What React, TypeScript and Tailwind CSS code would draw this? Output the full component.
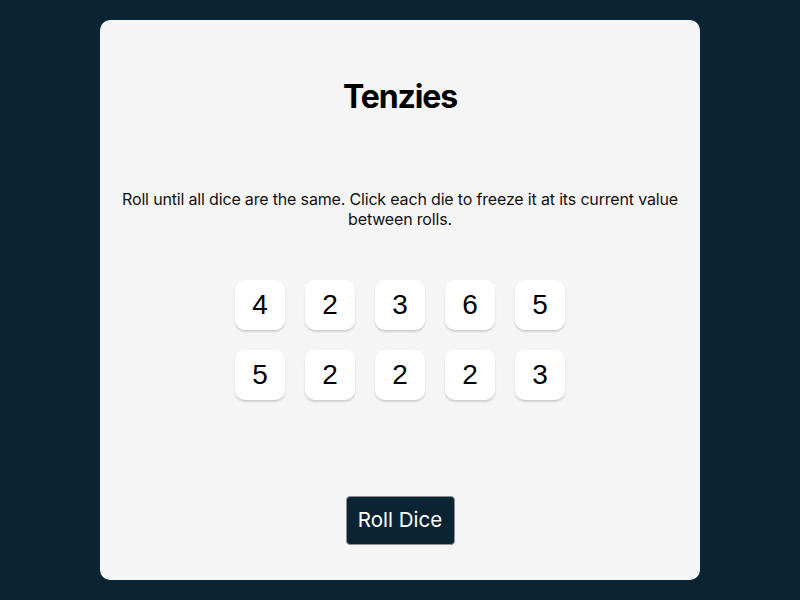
import React from "react";

const dice = [4, 2, 3, 6, 5, 5, 2, 2, 2, 3];

export default function App() {
  return (
    <div className="w-[800px] h-[600px] bg-[#0B2434] pt-5" style={{ fontFamily: "Inter, 'Liberation Sans', sans-serif" }}>
      <main className="mx-auto w-[600px] h-[560px] bg-[#F5F5F5] rounded-[10px] flex flex-col items-center px-5 pt-[58px]">
        <h1 className="text-[32px] leading-[38px] font-bold tracking-[-1.1px] text-black m-0">Tenzies</h1>
        <p className="mt-[73px] text-[16px] leading-[20px] tracking-[-0.17px] text-[#111] text-center">
          Roll until all dice are the same. Click each die to freeze it at its current value between rolls.
        </p>
        <div className="mt-[51px] grid grid-cols-5 gap-5">
          {dice.map((d, i) => (
            <button
              key={i}
              className="w-[50px] h-[50px] bg-white rounded-[10px] shadow-[0_2px_2px_rgba(0,0,0,0.15)] flex items-center justify-center text-[28px] text-black"
              style={{ fontFamily: "'Liberation Sans', Arial, sans-serif" }}
            >
              {d}
            </button>
          ))}
        </div>
        <button className="mt-[96px] w-[109px] h-[49px] bg-[#0B2434] text-white text-[20.5px] rounded-[4px] border border-[#8a8f94] flex items-center justify-center">
          Roll Dice
        </button>
      </main>
    </div>
  );
}
